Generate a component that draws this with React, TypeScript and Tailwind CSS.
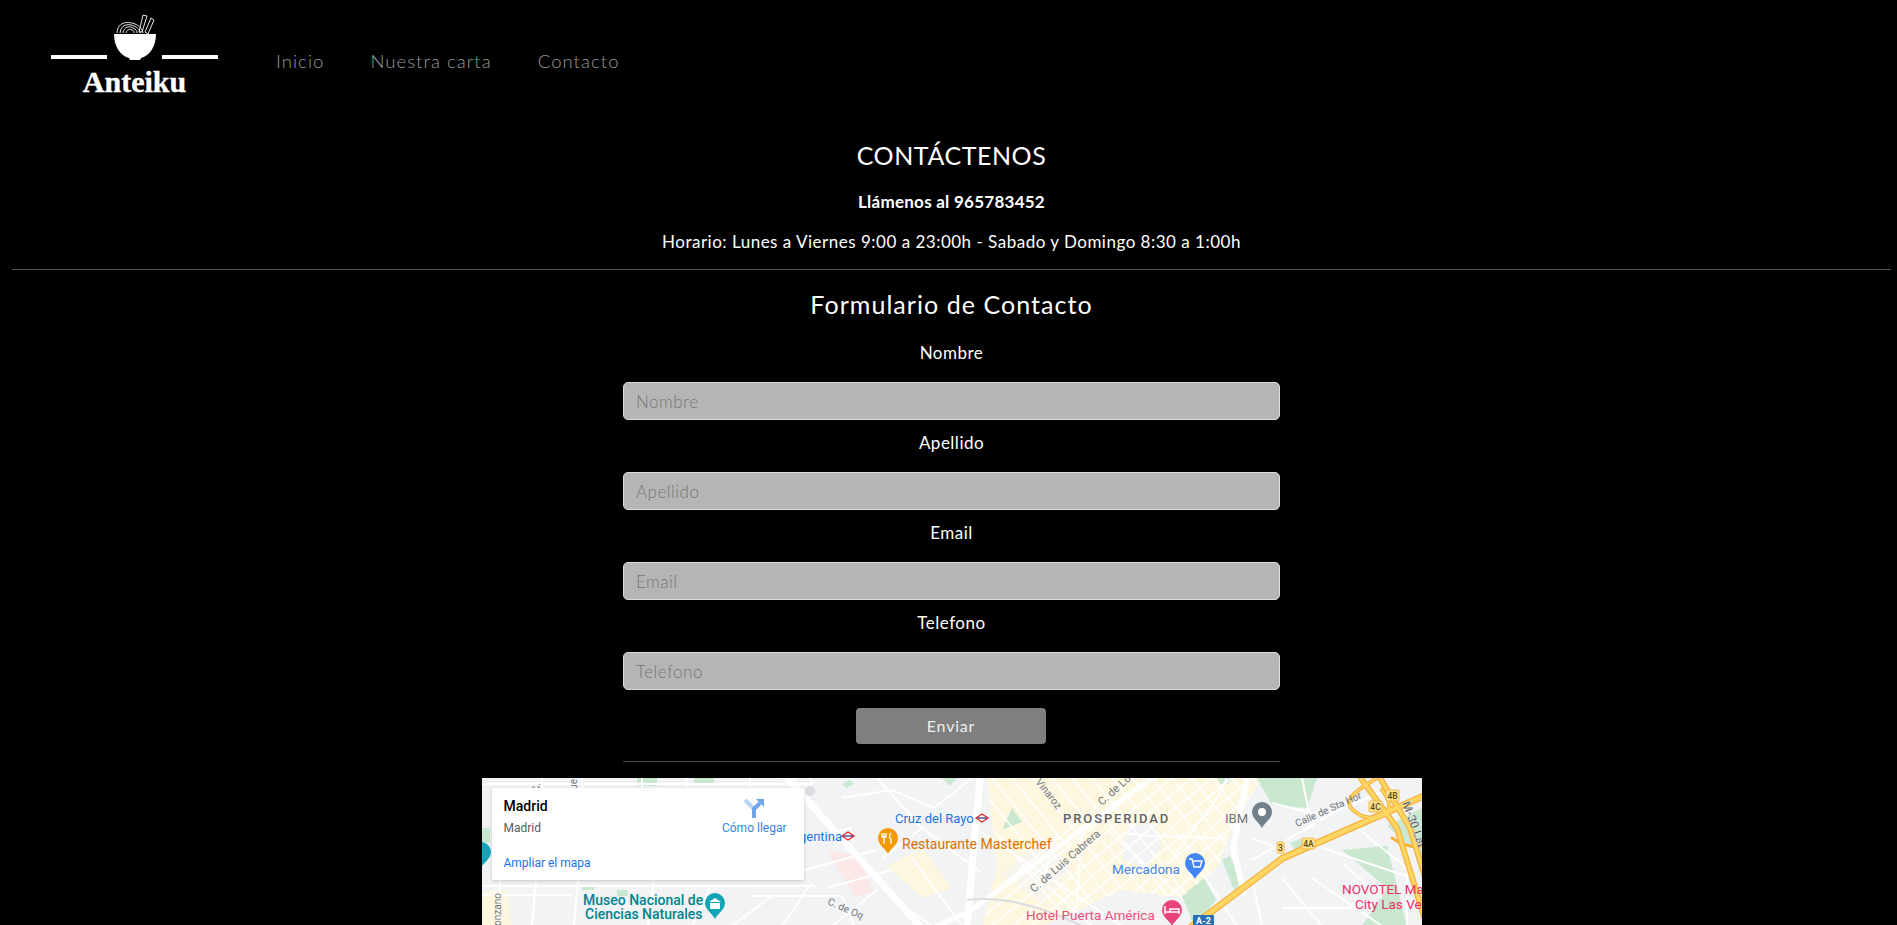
import type { ReactNode } from 'react';

const fields = ['Nombre', 'Apellido', 'Email', 'Telefono'];

function Logo() {
  return (
    <svg width="170" height="90" viewBox="0 0 170 90" className="block">
      <rect x="1" y="45" width="56" height="4" fill="#fff" />
      <rect x="112" y="45" width="56" height="4" fill="#fff" />
      <path d="M64 24 H106 C106 37 99 46 91 48 L90 50 H80 L79 48 C71 46 64 37 64 24Z" fill="#fff" />
      <g fill="none" stroke="#fff" strokeWidth="0.9">
        <path d="M67 23 C68 10 80 12 85 14 C90 16 92 19 93 23" />
        <path d="M70 23 C71 13 80 14 84 16 C88 18 90 20 90 23" />
        <path d="M73 23 C74 16 80 16 83 18 C86 19 87 21 87 23" />
        <path d="M76 23 C77 19 80 19 82 20 C84 21 84 22 84 23" />
        <path d="M89 22 L93 5 L97 6 L92 22Z" />
        <path d="M95 22 L101 8 L104 10 L98 24Z" />
      </g>
      <text x="84.5" y="82" textAnchor="middle" fill="#fff" stroke="#fff" strokeWidth="0.4" fontFamily="'Liberation Serif', serif" fontWeight="700" fontSize="30">Anteiku</text>
    </svg>
  );
}

function Pin({ x, y, color, children }: { x: number; y: number; color: string; children?: ReactNode }) {
  return (
    <g transform={`translate(${x} ${y})`}>
      <path d="M0 15 C-2 10 -10 6 -10 -1 A10 10 0 1 1 10 -1 C10 6 2 10 0 15Z" fill={color} />
      {children}
    </g>
  );
}

function Metro({ x, y }: { x: number; y: number }) {
  return (
    <g transform={`translate(${x} ${y})`} fill="none" stroke="#ea2b1f">
      <path d="M-6 0 L0 -4 L6 0 L0 4Z" strokeWidth="1.4" fill="#fff" />
      <path d="M-5 0 H5" strokeWidth="1.4" stroke="#3b4a9a" />
    </g>
  );
}

function Badge({ x, y, w, label }: { x: number; y: number; w: number; label: string }) {
  return (
    <g>
      <rect x={x} y={y} width={w} height="11" rx="1" fill="#fde293" stroke="#f2b233" strokeWidth="0.8" />
      <text x={x + w / 2} y={y + 8.5} textAnchor="middle" fontSize="8.5" fill="#5f4b0a" fontWeight="500">{label}</text>
    </g>
  );
}

const thinRoads = [
  'M0 108 H335', 'M0 117 H90', 'M96 102 L92 148', 'M54 102 L50 148', 'M18 102 L16 148', 'M172 102 L166 148',
  'M228 110 L210 148', 'M270 118 H360 L372 148', 'M290 118 L250 148', 'M330 104 L300 148', 'M0 6 H330', 'M100 0 V10',
  'M160 0 V10', 'M60 0 V10', 'M205 0 V10', 'M268 0 V10', 'M322 60 L370 50', 'M322 92 L395 72', 'M345 110 L410 92',
  'M360 20 L410 12 L452 30', 'M395 0 L440 50 L400 80', 'M430 80 L480 148', 'M395 112 L350 148', 'M410 120 L450 148',
  'M452 30 L490 0', 'M440 50 L500 95', 'M500 55 L640 148', 'M545 90 L610 148',
  'M575 55 L560 105', 'M600 50 L595 125', 'M625 52 L700 120', 'M640 55 L670 58 L745 60', 'M720 95 L755 148', 'M745 0 L735 20 L690 80',
  'M770 60 L800 72', 'M770 82 L860 30 L905 12', 'M770 100 L780 148', 'M800 100 L840 148', 'M830 100 L900 148', 'M860 85 L900 120',
  'M840 70 L930 100', 'M875 50 L925 90 V148', 'M790 25 L840 38', 'M820 0 L830 50', 'M800 130 H870',
];

const gridA = Array.from({ length: 16 }, (_, i) => 470 + i * 20);
const gridB = Array.from({ length: 16 }, (_, i) => 470 + i * 20);

function MapView() {
  return (
    <div className="relative h-[450px] w-[940px] overflow-hidden bg-[#f1f3f4]">
      <svg width="940" height="148" viewBox="0 0 940 148" className="block" fontFamily="Roboto, sans-serif">
        <defs>
          <clipPath id="blocks">
            <path d="M505 0 H780 L755 40 L735 90 L700 120 L640 112 L560 148 H500 L515 90Z" />
          </clipPath>
        </defs>
        <path d="M505 0 H780 L755 40 L735 90 L700 120 L640 112 L560 148 H500 L515 90Z" fill="#fef7e0" />
        <path d="M405 88 L440 70 L470 110 L440 120Z" fill="#fef7e0" />
        <path d="M0 113 H25 L30 148 H0Z" fill="#fef7e0" />
        <path d="M345 72 L378 78 L392 115 L372 118Z" fill="#fce8e6" />
        <g fill="#c9e8cf">
          <path d="M775 0 H835 L825 30 L790 27Z" />
          <path d="M808 65 L822 60 L826 72 L815 76Z" />
          <path d="M735 0 H752 L746 6 H738Z" />
          <path d="M700 118 L722 100 L734 122 L712 148Z" />
          <path d="M740 82 L748 78 L760 105 L752 112Z" />
          <path d="M905 48 L940 30 V78 L930 70Z" />
          <path d="M860 72 L905 68 L925 148 H880 L905 110Z" />
          <path d="M530 30 L540 44 L520 52Z" />
          <path d="M155 0 H175 V8 H155Z" />
          <path d="M212 0 H232 V6 H212Z" />
          <path d="M460 0 H475 L468 8Z" />
          <path d="M100 108 H112 V112 H100Z" />
          <path d="M135 112 H146 V118 H135Z" />
          <path d="M360 6 L368 2 L372 6 L364 10Z" />
          <path d="M0 50 H8 V65 H0Z" />
        </g>
        <path d="M645 48 L672 46 L680 70 L660 90 L640 80Z" fill="#f1f3f4" />
        <path d="M520 96 L560 60 L590 90 L560 125Z" fill="#f1f3f4" opacity="0.6" />
        <g stroke="#fff" strokeWidth="1.6" fill="none" clipPath="url(#blocks)">
          {gridA.map(x => <path key={x} d={`M${x} 148 L${x + 180} 0`} />)}
          {gridB.map(x => <path key={x} d={`M${x} 0 L${x + 120} 148`} />)}
        </g>
        <g stroke="#fff" strokeWidth="2" fill="none">
          {thinRoads.map(d => <path key={d} d={d} />)}
        </g>
        <g stroke="#fff" fill="none" strokeLinecap="round">
          <path d="M298 -8 L438 148" strokeWidth="7" />
          <path d="M498 0 L485 148" strokeWidth="7" />
          <path d="M700 -20 L648 16 L488 133 L455 148" strokeWidth="5" />
          <path d="M765 0 L751 70 L762 115" strokeWidth="6" />
          <path d="M320 -4 a9 9 0 1 0 1 0" strokeWidth="3" />
        </g>
        <circle cx="328" cy="13" r="5" fill="#dadce0" />
        <path d="M485 122 C520 118 560 128 600 148" stroke="#dadce0" strokeWidth="2" fill="none" />
        <g fill="none" stroke="#f6b13c" strokeLinecap="round">
          <path d="M705 152 L801 80 L885 43 L960 10" strokeWidth="7" />
          <path d="M875 -5 L915 50 L945 148" strokeWidth="6" />
          <path d="M895 -5 L928 50 L958 148" strokeWidth="6" />
          <path d="M895 0 C870 15 855 25 880 38 C905 45 915 30 900 12" strokeWidth="4" />
          <path d="M910 60 C925 70 935 70 945 66" strokeWidth="3" />
        </g>
        <g fill="none" stroke="#fdd663" strokeLinecap="round">
          <path d="M705 152 L801 80 L885 43 L960 10" strokeWidth="4.5" />
          <path d="M875 -5 L915 50 L945 148" strokeWidth="3.5" />
          <path d="M895 -5 L928 50 L958 148" strokeWidth="3.5" />
          <path d="M895 0 C870 15 855 25 880 38 C905 45 915 30 900 12" strokeWidth="2" />
        </g>

        <g fill="#70757a" fontSize="10">
          <text transform="translate(19 148) rotate(-90)" fontSize="10">onzano</text>
          <text transform="translate(58 5) rotate(-90)" textAnchor="end">C.</text>
          <text transform="translate(95 1) rotate(-90)" textAnchor="end">Que</text>
          <text transform="translate(345 126) rotate(24)">C. de Oq</text>
          <text transform="translate(553 4) rotate(52)" fontSize="10.5">Vinaroz</text>
          <text transform="translate(620 28) rotate(-42)" fontSize="11">C. de Lo</text>
          <text transform="translate(552 115) rotate(-41)" fontSize="11">C. de Luis Cabrera</text>
          <text transform="translate(815 49) rotate(-24)" fontSize="10">Calle de Sta Hor</text>
        </g>
        <text transform="translate(920 25) rotate(70)" fontSize="12" fontWeight="500" fill="#3c4043" stroke="#fff" strokeWidth="0.3">M-30 Lat</text>

        <g fontSize="14" fontWeight="500" fill="#00838f">
          <text x="101" y="127">Museo Nacional de</text>
          <text x="103" y="141">Ciencias Naturales</text>
        </g>
        <Pin x={233} y={126} color="#12a5b8">
          <path d="M-6 -2 L0 -6 L6 -2Z M-5 -1 H5 V5 H-5Z" fill="#fff" />
        </Pin>
        <Pin x={-1} y={75} color="#12a5b8" />

        <text x="360" y="63" textAnchor="end" fontSize="13" fill="#1a73e8">Argentina</text>
        <Metro x={366} y={58} />
        <text x="413" y="45" fontSize="13" fill="#1a73e8">Cruz del Rayo</text>
        <Metro x={500} y={40} />

        <text x="420" y="71" fontSize="14" fill="#d96f05">Restaurante Masterchef</text>
        <Pin x={406} y={61} color="#f29900">
          <path d="M-4 -6 V-1 M-6 -6 V-2 H-2 V-6 M-4 -1 V5 M3 -6 C1 -4 1 -1 3 0 V5" stroke="#fff" strokeWidth="1.3" fill="none" />
        </Pin>

        <text x="581" y="45" fontSize="13" fontWeight="500" fill="#5f6368" letterSpacing="1.9">PROSPERIDAD</text>
        <text x="743" y="45" fontSize="13" fill="#70757a">IBM</text>
        <Pin x={780} y={35} color="#70818d">
          <circle r="4" fill="#fff" cy="-1" />
        </Pin>

        <text x="630" y="96" fontSize="13.5" fill="#4285f4">Mercadona</text>
        <Pin x={713} y={86} color="#4285f4">
          <path d="M-6 -5 H-3 L-1 3 H5 L7 -3 H-2" fill="none" stroke="#fff" strokeWidth="1.4" />
        </Pin>

        <text x="544" y="142" fontSize="13.5" fill="#ea4f7a">Hotel Puerta América</text>
        <Pin x={690} y={133} color="#e8437a">
          <path d="M-7 -5 V3 M-7 1 H7 V3 M7 1 V-2 H-2 V1" stroke="#fff" strokeWidth="1.5" fill="none" />
        </Pin>

        <g fontSize="13.5" fill="#ea2f6b">
          <text x="860" y="116">NOVOTEL Madrid</text>
          <text x="873" y="131">City Las Ventas</text>
        </g>

        <rect x="711" y="137" width="21" height="11" rx="1" fill="#2a6fb3" />
        <text x="721.5" y="146" textAnchor="middle" fontSize="9" fontWeight="700" fill="#fff">A-2</text>
        <Badge x={795} y={64} w={7} label="3" />
        <Badge x={820} y={60} w={13} label="4A" />
        <Badge x={887} y={23} w={13} label="4C" />
        <Badge x={904} y={12} w={13} label="4B" />
      </svg>

      <div className="absolute left-[10px] top-[10px] h-[92px] w-[312px] rounded-[2px] bg-white font-['Roboto',sans-serif] shadow-[0_1px_4px_-1px_rgba(0,0,0,0.3)]">
        <div className="absolute left-[12px] top-[10px] text-[14px] leading-[16px] font-medium text-black">Madrid</div>
        <div className="absolute left-[12px] top-[33px] text-[12px] leading-[14px] text-[#5b5b5b]">Madrid</div>
        <div className="absolute left-[12px] top-[68px] text-[12px] leading-[14px] text-[#1a73e8]">Ampliar el mapa</div>
        <div className="absolute right-[17px] top-[10px] flex flex-col items-center gap-[3px] text-[12px] leading-[14px] text-[#3a84df]">
          <svg width="20" height="20" viewBox="0 0 20 20">
            <path d="M1 2 L10 11" stroke="#b7d3f6" strokeWidth="4" fill="none" />
            <path d="M10 20 V11 L16 5" stroke="#6fa5ea" strokeWidth="4" fill="none" />
            <path d="M12 1 H20 V9Z" fill="#6fa5ea" />
          </svg>
          <span>Cómo llegar</span>
        </div>
      </div>
    </div>
  );
}

export default function App() {
  return (
    <div className="h-screen overflow-hidden bg-black font-['Lato',sans-serif] text-white">
      <header className="flex h-[120px] items-start pl-[50px]">
        <div className="pt-[10px]"><Logo /></div>
        <nav className="ml-[56px] flex gap-[46px] pt-[48px] text-[18.5px] leading-[26px] font-light tracking-[1.05px] text-[#9a9a9a]">
          <a>Inicio</a>
          <a>Nuestra carta</a>
          <a>Contacto</a>
        </nav>
      </header>

      <main className="pl-[12px] pr-[6px] text-center">
        <h1 className="pt-[20px] text-[25px] leading-[30px] font-normal tracking-[0.55px]">CONTÁCTENOS</h1>
        <p className="mt-[20px] text-[17px] leading-[24px] font-bold tracking-[0.25px]">Llámenos al 965783452</p>
        <p className="mt-[16px] text-[17px] leading-[24px] tracking-[0.5px]">Horario: Lunes a Viernes 9:00 a 23:00h - Sabado y Domingo 8:30 a 1:00h</p>
        <hr className="mt-[15px] border-t border-[#555]" />

        <h2 className="mt-[19px] text-[25px] leading-[30px] font-normal tracking-[1.05px]">Formulario de Contacto</h2>
        <form className="mx-auto mt-[21px] w-[657px]">
          {fields.map(f => (
            <div key={f} className="mb-[10px]">
              <label className="block pt-[1px] text-[17px] leading-[24px] tracking-[0.5px]">{f}</label>
              <input
                placeholder={f}
                className="mt-[17px] block h-[38px] w-full rounded-[5px] border border-[#ddd] bg-[#b5b5b5] px-[12px] text-[17px] tracking-[0.5px] font-light outline-none placeholder:text-[#757575]"
              />
            </div>
          ))}
          <button type="button" className="ml-[233px] mt-[18px] block h-[36px] w-[190px] rounded-[4px] bg-[#7f7f7f] text-[16px] tracking-[0.8px] text-[#eee]">Enviar</button>
          <hr className="mt-[17px] border-t border-[#444]" />
        </form>
        <div className="mt-[16px] flex justify-center">
          <MapView />
        </div>
      </main>
    </div>
  );
}
